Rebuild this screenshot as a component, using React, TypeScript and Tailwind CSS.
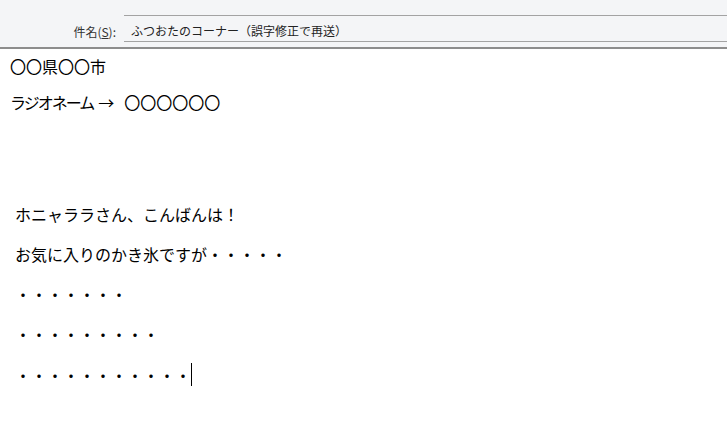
const font = { fontFamily: '"Noto Sans CJK JP", "Noto Sans", sans-serif' };

export default function App() {
  return (
    <div className="w-[727px] h-[427px] bg-white overflow-hidden text-black" style={font}>
      {/* message header */}
      <div className="bg-[#f4f5f7]">
        <div className="flex h-[16px]">
          <div className="w-[124px]" />
          <div className="flex-1 border-b border-[#a3a3a3]" />
        </div>
        <div className="flex h-[26px]">
          <div className="w-[124px] flex items-center justify-end pr-[8px] pt-[5px] text-[12px] text-[#333]">
            件名(<span className="underline">S</span>):
          </div>
          <div className="flex-1 flex items-center pl-[7px] pt-[5px] border-b border-[#a3a3a3] text-[12px] text-[#222]">
            ふつおたのコーナー（誤字修正で再送）
          </div>
        </div>
        <div className="h-[5px]" />
      </div>
      <div className="h-[2px] bg-[#8d8d8d]" />

      {/* body */}
      <div className="text-[16px] leading-[22px]">
        <div className="pl-[10px] pt-[6px]">〇〇県〇〇市</div>
        <div className="pl-[10px] mt-[14px] flex items-center">
          <span className="tracking-[-2px]">ラジオネーム</span>
          <span className="ml-[5px] mr-[10px]">→</span>
          <span>〇〇〇〇〇〇</span>
        </div>

        <div className="pl-[15px] mt-[90px] flex flex-col gap-[18px]">
          <div>ホニャララさん、こんばんは！</div>
          <div>お気に入りのかき氷ですが・・・・・</div>
          <div>・・・・・・・</div>
          <div>・・・・・・・・・</div>
          <div className="flex items-center">
            <span>・・・・・・・・・・・</span>
            <span className="inline-block w-[1px] h-[23px] bg-black" />
          </div>
        </div>
      </div>
    </div>
  );
}
